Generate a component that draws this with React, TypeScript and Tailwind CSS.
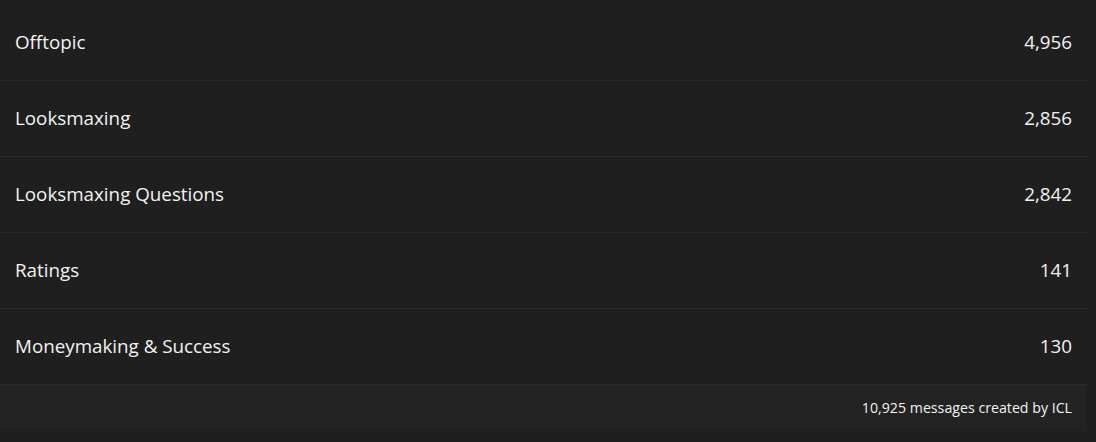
const rows = [
  { name: 'Offtopic', count: '4,956' },
  { name: 'Looksmaxing', count: '2,856' },
  { name: 'Looksmaxing Questions', count: '2,842' },
  { name: 'Ratings', count: '141' },
  { name: 'Moneymaking & Success', count: '130' },
];

export default function App() {
  return (
    <div
      className="w-[1096px] h-[442px] bg-[#1f1f1f] text-[#f2f2f2] overflow-hidden pt-[5px]"
      style={{ fontFamily: '"Open Sans", "Noto Sans", sans-serif' }}
    >
      <div className="w-[1087px]">
        {rows.map((row) => (
          <div
            key={row.name}
            className="h-[76px] flex items-center justify-between px-[15px] border-b border-[#2a2a2a] text-[18.8px]"
          >
            <span>{row.name}</span>
            <span>{row.count}</span>
          </div>
        ))}
        <div className="h-[46px] flex items-center justify-end px-[15px] bg-[#232323] text-[14.2px]">
          10,925 messages created by ICL
        </div>
      </div>
    </div>
  );
}
